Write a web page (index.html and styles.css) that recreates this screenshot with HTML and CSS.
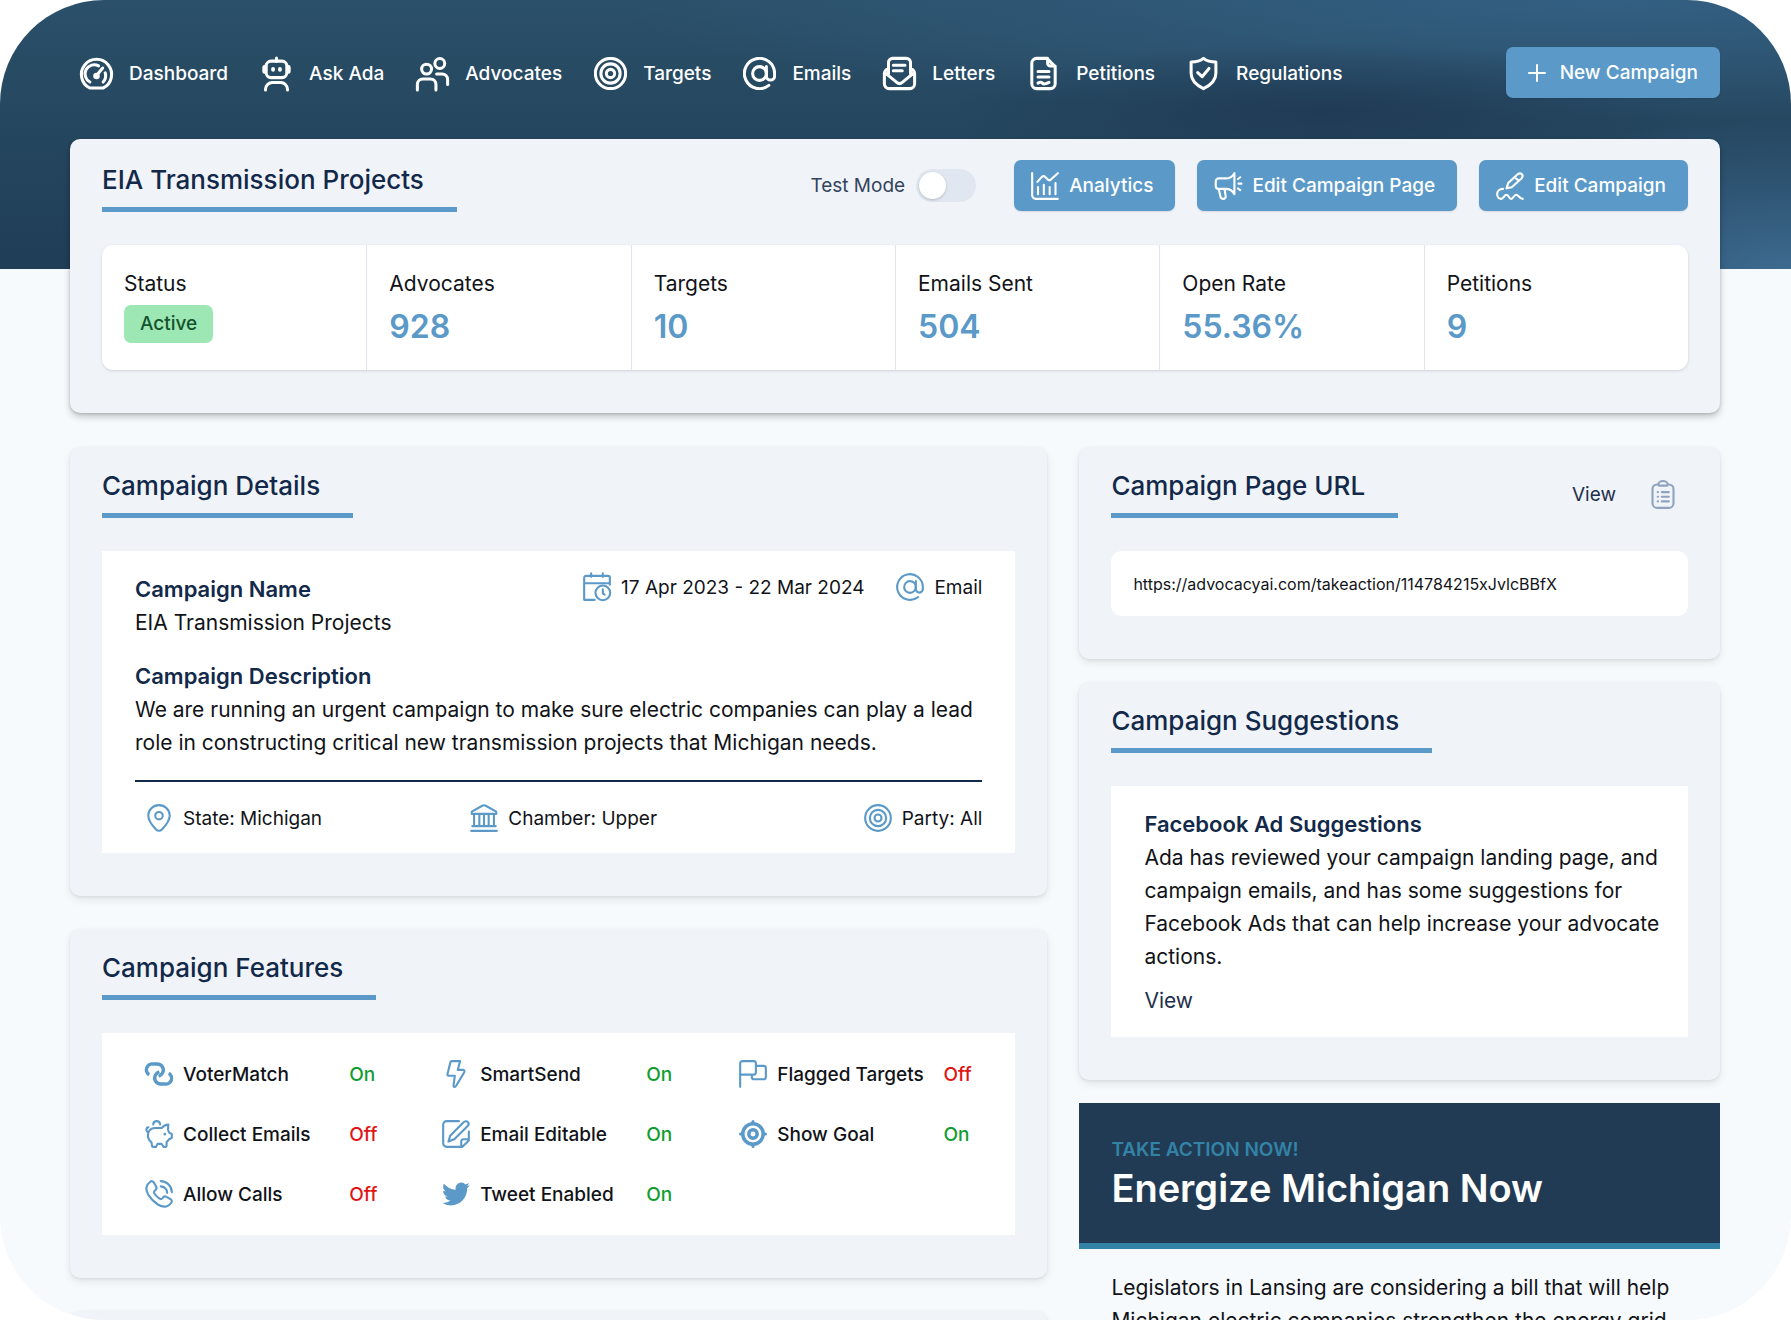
FILE: index.html
```html
<!DOCTYPE html>
<html lang="en">
<head>
<meta charset="utf-8">
<meta name="viewport" content="width=device-width, initial-scale=1">
<title>EIA Transmission Projects</title>
<link rel="stylesheet" href="styles.css">
</head>
<body>
<svg class="sprite" aria-hidden="true">
  <symbol id="i-target" viewBox="0 0 24 24"><circle cx="12" cy="12" r="11"/><circle cx="12" cy="12" r="7"/><circle cx="12" cy="12" r="3"/></symbol>
  <symbol id="i-at" viewBox="0 0 24 24"><circle cx="12" cy="12" r="5"/><path d="M17 7v6.800a3 3 0 0 0 6 0V12a11 11 0 1 0-4.200 8.650"/></symbol>
</svg>
<div class="page">
  <header class="hero">
    <div class="topbar">
      <nav class="nav" aria-label="Main">
        <a href="#"><svg class="icon-lg" viewBox="0 0 24 24"><path d="M7 22.500A11 11 0 1 1 17 22.500Z"/><path d="M7.200 18.200A6.600 6.600 0 0 1 13.500 6.400M18.300 11.500A6.600 6.600 0 0 1 16.800 18.200M12 13.500l4.500-5.500"/><circle cx="12" cy="13.800" r="1.300"/></svg>Dashboard</a>
        <a href="#"><svg class="icon-lg" viewBox="0 0 24 24"><rect x="4.500" y="3" width="15" height="12" rx="3.500"/><path d="M12 .8V3M4 24v-.5a5 5 0 0 1 5-5h6a5 5 0 0 1 5 5v.5"/><path d="M3.300 7.500v3M20.700 7.500v3" stroke-width="3.200"/><path d="M9.500 8.700v.6M14.500 8.700v.6" stroke-width="2.800"/></svg>Ask Ada</a>
        <a href="#"><svg class="icon-lg" viewBox="0 0 24 24"><circle cx="7.700" cy="8.800" r="3.600"/><circle cx="17.300" cy="4.700" r="3.600"/><path d="M1 24v-4a4 4 0 0 1 4-4h5.500a4 4 0 0 1 4 4v4M15 12.300h4a4 4 0 0 1 4 4V20"/></svg>Advocates</a>
        <a href="#"><svg class="icon-lg"><use href="#i-target"/></svg>Targets</a>
        <a href="#"><svg class="icon-lg"><use href="#i-at"/></svg>Emails</a>
        <a href="#"><svg class="icon-lg" viewBox="0 0 24 24"><path d="M4 12V4a3 3 0 0 1 3-3h10a3 3 0 0 1 3 3v8M7.500 6h8.500M7.500 10h6.500M4 8.500a4 4 0 0 0-3 3.500v7.500A3.500 3.500 0 0 0 4.500 23h15a3.500 3.500 0 0 0 3.500-3.500V12a4 4 0 0 0-3-3.500M1.500 11.500l8.500 7a3 3 0 0 0 4 0l8.500-7"/></svg>Letters</a>
        <a href="#"><svg class="icon-lg" viewBox="0 0 24 24"><path d="M14.500 1H7a3.500 3.500 0 0 0-3.500 3.500v15A3.500 3.500 0 0 0 7 23h10a3.500 3.500 0 0 0 3.500-3.500V7ZM15 1v3.500A2 2 0 0 0 17 6.500h3.500M8 10.500h8M8 14.500h8M8 19c1.500-1 2.300-1 3.200 0s2.800.5 4.800-.5"/></svg>Petitions</a>
        <a href="#"><svg class="icon-lg" viewBox="0 0 24 24"><path d="M12 1c2.500 2 5.500 2.600 9 2.700V12c0 5-4.500 8.800-9 11-4.500-2.200-9-6-9-11V3.700C6.500 3.600 9.500 3 12 1Z"/><path d="M7.800 11.300l3.200 3 5-6"/></svg>Regulations</a>
      </nav>
      <button class="btn btn-new" type="button"><svg class="icon-plus" viewBox="0 0 18 18"><path d="M9 1v16M1 9h16"/></svg>New Campaign</button>
    </div>
  </header>

  <main class="content">
    <section class="card overview">
      <div class="card-head">
        <h1 class="title">EIA Transmission Projects</h1>
        <div class="actions">
          <label class="toggle">Test Mode<input type="checkbox" role="switch"></label>
          <button class="btn" type="button"><svg class="icon" viewBox="0 0 24 24"><path d="M1 1v19a3 3 0 0 0 3 3h19M6 19v-6M11 19v-8M16 19v-6M21 19V9.500M5.500 8.500l4-4.500a2 2 0 0 1 2.500 0l2.500 2.500a2 2 0 0 0 2.500 0L23 1"/></svg>Analytics</button>
          <button class="btn" type="button"><svg class="icon" viewBox="0 0 24 24"><path d="M17.500 1c-1.500 3-4 4.500-7.500 4.500H4A2.500 2.500 0 0 0 1.500 8v4A2.500 2.500 0 0 0 4 14.500h6c3.500 0 6 1.500 7.500 4.500ZM4 14.500l1.500 6.500c.3 1.300 1.200 2 2.500 2s2.300-1 2-2.500L9 14.500M21 10h2.500M20.500 6l2-1.500M20.500 14l2 1.500"/></svg>Edit Campaign Page</button>
          <button class="btn" type="button"><svg class="icon" viewBox="0 0 24 24"><path d="M9 14l1.500-4.500L18.500 2c1.200-1 2.500-1.200 3.500-.2s1 2.400 0 3.500L13.500 13ZM17 5.500l2 1.500M6 14.500c-3 0-5 1.800-5 4.300S2.500 23 4.500 23s2.500-3.500 4.500-3.500S11 23 13 23s2.300-3.500 4.300-3.500S20 23 23 23"/></svg>Edit Campaign</button>
        </div>
      </div>
      <dl class="stats">
        <div class="stat"><dt>Status</dt><dd><span class="badge">Active</span></dd></div>
        <div class="stat"><dt>Advocates</dt><dd>928</dd></div>
        <div class="stat"><dt>Targets</dt><dd>10</dd></div>
        <div class="stat"><dt>Emails Sent</dt><dd>504</dd></div>
        <div class="stat"><dt>Open Rate</dt><dd>55.36%</dd></div>
        <div class="stat"><dt>Petitions</dt><dd>9</dd></div>
      </dl>
    </section>

    <div class="columns">
      <div class="main-col">
        <section class="card">
          <div class="card-head"><h2 class="title">Campaign Details</h2></div>
          <div class="box details">
            <div class="details-top">
              <div>
                <h3 class="label">Campaign Name</h3>
                <p>EIA Transmission Projects</p>
              </div>
              <div class="meta">
                <span class="meta-item"><svg class="icon" viewBox="0 0 24 24"><path d="M10 23H1V4a1.500 1.500 0 0 1 1.500-1.500h19A1.500 1.500 0 0 1 23 4v6M1 8.800h22M7 .3v3M17 .3v3"/><circle cx="17" cy="17" r="6.300"/><path d="M17 14v3.500l1.500 1"/></svg>17 Apr 2023 - 22 Mar 2024</span>
                <span class="meta-item"><svg class="icon"><use href="#i-at"/></svg>Email</span>
              </div>
            </div>
            <div>
              <h3 class="label">Campaign Description</h3>
              <p>We are running an urgent campaign to make sure electric companies can play a lead role in constructing critical new transmission projects that Michigan needs.</p>
            </div>
            <div class="facts">
              <span class="meta-item"><svg class="icon" viewBox="0 0 24 24"><path d="M12 1c5.200 0 9.200 4 9.200 9 0 4.500-4 9-6.700 11.900a3.500 3.500 0 0 1-5 0C6.800 19 2.800 14.500 2.800 10c0-5 4-9 9.200-9Z"/><circle cx="12" cy="10" r="3.200"/></svg>State: Michigan</span>
              <span class="meta-item"><svg class="icon" viewBox="0 0 24 24"><path d="M1.500 8.500V6.500L10.500 1.500a3 3 0 0 1 3 0L22.500 6.500v2ZM1 23h22M2 19h20M3.500 9v10M8 9v10M12 9v10M16 9v10M20.500 9v10"/></svg>Chamber: Upper</span>
              <span class="meta-item"><svg class="icon"><use href="#i-target"/></svg>Party: All</span>
            </div>
          </div>
        </section>

        <section class="card">
          <div class="card-head"><h2 class="title">Campaign Features</h2></div>
          <ul class="box features">
            <li><svg class="icon" viewBox="0 0 24 24"><g stroke-width="2.900" stroke-linecap="butt"><path d="M3.600 12.600A5 5 0 0 1 7 3.400h3.500a5.200 5.200 0 0 1 4.600 7.600c-.8 1.300-1.900 2.300-3.400 2.900"/><path d="M20.400 11.400A5 5 0 0 1 17 20.600h-3.500a5.200 5.200 0 0 1-4.600-7.600c.8-1.300 1.900-2.300 3.400-2.900"/></g></svg>VoterMatch <b class="on">On</b></li>
            <li><svg class="icon" viewBox="0 0 24 24"><path d="M8.500 1h7L13.500 8.500H18a1.300 1.300 0 0 1 1.100 2L12 22.300c-.9 1.400-2.300.8-2.100-.6L11 13.500H6c-1 0-1.500-.7-1.300-1.500L7.200 2A1.300 1.300 0 0 1 8.500 1Z"/></svg>SmartSend <b class="on">On</b></li>
            <li><svg class="icon" viewBox="0 0 24 24"><path d="M1 23V3a2 2 0 0 1 2-2h9.500a2 2 0 0 1 2 2v7.500a2 2 0 0 1-2 2H1M14.500 5H21a2 2 0 0 1 2 2v7.500a2 2 0 0 1-2 2h-8a2 2 0 0 1-2-2v-2"/></svg>Flagged Targets <b class="off">Off</b></li>
            <li><svg class="icon" viewBox="0 0 24 24"><path d="M8.500 6.800h6c1.500-1.800 3.200-2.700 5.500-2.800l-.3 4.500 1.200 2.500 2.100 1v3.200l-2.300 1.300-2.200 2.500v3a1 1 0 0 1-1 1h-1.700L14.300 20.500h-3.600L9.500 23H7a1 1 0 0 1-1-1l-.5-3C3.500 17.500 2.500 15.500 2.500 13c0-3.500 2.500-6.200 6-6.200ZM2.800 10.500C.8 10 .5 6.500 3 6.200M7 3.800C7.300 2 8.500 1 10 1s2.700 1 3 2.800"/><path d="M17 12v.2" stroke-width="2.200"/></svg>Collect Emails <b class="off">Off</b></li>
            <li><svg class="icon" viewBox="0 0 24 24"><path d="M14.500 1H4a3 3 0 0 0-3 3v16a3 3 0 0 0 3 3h13.500L23 17.500V10M23 16.500h-4.500a2 2 0 0 0-2 2V23M5.500 18.500l1.500-5L18.500 2c1.200-1.200 2.800-1.200 3.700-.2s.8 2.300-.2 3.300L10.500 16.500Z"/></svg>Email Editable <b class="on">On</b></li>
            <li><svg class="icon" viewBox="0 0 24 24"><circle cx="12" cy="12" r="8.800" stroke-width="3"/><circle cx="12" cy="12" r="3.600" stroke-width="3"/><path d="M12 1.300v2M12 20.700v2M1.300 12h2M20.700 12h2" stroke-width="2.600"/></svg>Show Goal <b class="on">On</b></li>
            <li><svg class="icon" viewBox="0 0 24 24"><path d="M7.500 2l2 3.500c.8 1.300.4 2.500-1 3.500-1 .8-1 1.800-.3 2.800a16 16 0 0 0 4 4c1 .7 2 .7 2.800-.3 1-1.400 2.200-1.800 3.500-1L22 16.500c1.200.8 1.300 2 .5 3-2.800 4-7 4.200-11.500 1.500A27 27 0 0 1 3 13C.3 8.500.5 4.500 4.500 1.500c1-.8 2.200-.7 3 .5ZM13.500 1A9.500 9.500 0 0 1 23 10.500M13.500 5.500a5.500 5.500 0 0 1 5.500 5.500"/></svg>Allow Calls <b class="off">Off</b></li>
            <li><svg class="icon icon-solid" viewBox="0 0 24 24"><path d="M23.950 4.570a10 10 0 0 1-2.820.770 4.960 4.960 0 0 0 2.160-2.720c-.950.550-2 .950-3.130 1.180a4.920 4.920 0 0 0-8.380 4.480C7.690 8.090 4.070 6.130 1.640 3.160a4.820 4.820 0 0 0-.670 2.480c0 1.710.870 3.210 2.190 4.100a4.900 4.900 0 0 1-2.230-.620v.060a4.920 4.920 0 0 0 3.950 4.830 5 5 0 0 1-2.210.080 4.940 4.940 0 0 0 4.600 3.420A9.870 9.870 0 0 1 0 19.540a14 14 0 0 0 7.550 2.210c9.050 0 14-7.500 14-13.980 0-.210 0-.420-.020-.630a9.940 9.940 0 0 0 2.460-2.550z"/></svg>Tweet Enabled <b class="on">On</b></li>
          </ul>
        </section>

        <section class="card"></section>
      </div>

      <div class="side-col">
        <section class="card">
          <div class="card-head">
            <h2 class="title">Campaign Page URL</h2>
            <div class="url-actions">
              <a href="#">View</a>
              <button class="copy" type="button" aria-label="Copy URL"><svg class="icon" viewBox="0 0 24 24"><path d="M8 3H7a4 4 0 0 0-4 4v12a4 4 0 0 0 4 4h10a4 4 0 0 0 4-4V7a4 4 0 0 0-4-4h-1a4 3 0 0 0-8 0ZM8 3a1 1 0 0 0 1 1h6a1 1 0 0 0 1-1M11 9.500h6M11 13.500h6M11 17.500h6M7.500 9.500h.2M7.500 13.500h.2M7.500 17.500h.2"/></svg></button>
            </div>
          </div>
          <input class="url" type="text" readonly aria-label="Campaign page URL" value="https://advocacyai.com/takeaction/114784215xJvlcBBfX">
        </section>

        <section class="card">
          <div class="card-head"><h2 class="title">Campaign Suggestions</h2></div>
          <div class="box suggestion">
            <h3 class="label">Facebook Ad Suggestions</h3>
            <p>Ada has reviewed your campaign landing page, and campaign emails, and has some suggestions for Facebook Ads that can help increase your advocate actions.</p>
            <a href="#">View</a>
          </div>
        </section>

        <article class="preview">
          <header class="banner">
            <p class="kicker">TAKE ACTION NOW!</p>
            <h2>Energize Michigan Now</h2>
          </header>
          <p class="preview-text">Legislators in Lansing are considering a bill that will help Michigan electric companies strengthen the energy grid</p>
        </article>
      </div>
    </div>
  </main>
</div>
</body>
</html>
```

FILE: styles.css
```css
:root {
  --blue: #5a99c8;
  --navy: #12294a;
  --ink: #111318;
  --surface: #f0f3f8;
  --canvas: #f7fafd;
}

* {
  box-sizing: border-box;
}

body {
  margin: 0;
  background: #fff;
  color: var(--ink);
  font: 400 19px/28px Inter, "Liberation Sans", sans-serif;
}

h1, h2, h3, p, dl, dd, ul {
  margin: 0;
  padding: 0;
}

a {
  color: inherit;
  text-decoration: none;
}

button, input {
  font: inherit;
}

svg {
  flex: none;
  fill: none;
  stroke: currentColor;
  stroke-linecap: round;
  stroke-linejoin: round;
}

.sprite {
  position: absolute;
  width: 0;
  height: 0;
}

.icon {
  width: 28px;
  height: 28px;
  stroke-width: 1.8;
  overflow: visible;
}

.icon-lg {
  width: 33px;
  height: 33px;
  stroke-width: 2.2;
  overflow: visible;
}

.icon-solid {
  fill: currentColor;
  stroke: none;
}

.icon-plus {
  width: 18px;
  height: 18px;
  stroke-width: 2;
}

.page {
  height: 100vh;
  overflow-y: auto;
  scrollbar-width: none;
  border-radius: 104px;
  background: var(--canvas);
}

/* Header */

.hero {
  height: 269px;
  padding: 47px 71px 0 70px;
  background:
    radial-gradient(ellipse 420px 150px at 100% 100%, #3d6b90, transparent),
    radial-gradient(ellipse 380px 70px at 74% 42%, #203b55, transparent),
    radial-gradient(ellipse 1000px 120px at 90% 0, #335f82, transparent),
    linear-gradient(#2b5069, #25465f 50%, #203d57);
}

.topbar {
  display: flex;
  align-items: center;
  justify-content: space-between;
}

.nav {
  display: flex;
  gap: 32px;
  padding: 2px 0 0 10px;
  color: #fff;
  font-weight: 500;
}

.nav a {
  display: flex;
  align-items: center;
  gap: 16px;
}

.btn {
  display: flex;
  align-items: center;
  gap: 10px;
  height: 51px;
  padding: 0 22px 0 17px;
  border: 0;
  border-radius: 7px;
  background: var(--blue);
  color: #fff;
  font-weight: 500;
  white-space: nowrap;
  box-shadow: 0 1px 2px rgba(0, 0, 0, .1);
}

.btn-new {
  gap: 14px;
  padding-left: 22px;
}

/* Cards */

.content {
  margin-top: -130px;
  padding: 0 71px 0 70px;
}

.card {
  min-height: 120px;
  padding: 19px 32px 43px;
  border-radius: 10px;
  background: var(--surface);
  box-shadow: 0 4px 8px rgba(0, 0, 0, .08), 0 1px 3px rgba(0, 0, 0, .08);
}

.overview {
  padding-top: 21px;
  box-shadow: 0 4px 7px rgba(0, 0, 0, .2), 0 1px 3px rgba(0, 0, 0, .16);
}

.card-head {
  display: flex;
  align-items: flex-start;
  justify-content: space-between;
  margin-bottom: 33px;
}

.title {
  padding: 0 33px 8px 0;
  border-bottom: 5px solid var(--blue);
  color: var(--navy);
  font-size: 26px;
  line-height: 39px;
  font-weight: 500;
}

.actions {
  display: flex;
  align-items: center;
  gap: 22px;
}

.toggle {
  display: flex;
  align-items: center;
  gap: 11px;
  margin-right: 16px;
  color: #33435c;
}

.toggle input {
  appearance: none;
  width: 60px;
  height: 33px;
  margin: 0;
  padding: 3px;
  border-radius: 17px;
  background: #e1e7f0;
}

.toggle input::before {
  content: "";
  display: block;
  width: 27px;
  height: 27px;
  border-radius: 50%;
  background: #fff;
  box-shadow: 0 1px 3px rgba(0, 0, 0, .2);
}

.toggle input:checked::before {
  margin-left: auto;
}

.stats {
  display: grid;
  grid-template-columns: repeat(6, 1fr);
  border-radius: 11px;
  background: #fff;
  box-shadow: 0 1px 3px rgba(0, 0, 0, .14);
}

.stat {
  padding: 22px;
}

.stat + .stat {
  border-left: 1px solid #dfe5ee;
}

.stat dt {
  font-size: 21px;
  line-height: 33px;
}

.stat dd {
  height: 43px;
  margin-top: 5px;
  color: var(--blue);
  font-size: 32px;
  line-height: 43px;
  font-weight: 600;
}

.badge {
  display: block;
  width: fit-content;
  padding: 5px 16px;
  border-radius: 7px;
  background: #9de7b5;
  color: #14532d;
  font-size: 19px;
  line-height: 28px;
  font-weight: 500;
}

.columns {
  display: grid;
  grid-template-columns: 978fr 641fr;
  gap: 32px;
  margin-top: 34px;
}

.main-col,
.side-col {
  display: flex;
  flex-direction: column;
  gap: 33px;
  min-width: 0;
}

.side-col {
  gap: 23px;
}

.box {
  background: #fff;
  font-size: 21px;
  line-height: 33px;
}

.label {
  color: var(--navy);
  font-size: 22px;
  font-weight: 600;
}

.details {
  display: flex;
  flex-direction: column;
  gap: 21px;
  padding: 22px 33px 21px;
}

.details-top {
  display: flex;
  justify-content: space-between;
}

.meta {
  display: flex;
  gap: 32px;
}

.meta-item {
  display: flex;
  align-items: center;
  gap: 10px;
  height: 28px;
  font-size: 19px;
}

.meta-item .icon,
.features .icon {
  color: var(--blue);
}

.facts {
  display: grid;
  grid-template-columns: repeat(3, 1fr);
  padding: 22px 0 0 10px;
  border-top: 2px solid var(--navy);
}

.facts .meta-item:nth-child(2) {
  justify-self: center;
}

.facts .meta-item:nth-child(3) {
  justify-self: end;
}

.features {
  display: grid;
  grid-template-columns: repeat(3, 1fr);
  padding: 11px;
  list-style: none;
  font-size: 19px;
  font-weight: 500;
}

.features li {
  display: grid;
  grid-template-columns: 28px 1fr 61px;
  column-gap: 10px;
  align-items: center;
  height: 60px;
  padding-left: 32px;
  white-space: nowrap;
}

.features b {
  font-weight: 500;
}

.on {
  color: #119c2f;
}

.off {
  color: #e01616;
}

.url-actions {
  display: flex;
  align-items: center;
  gap: 33px;
  padding: 15px 11px 0 0;
  color: #1e2f4b;
}

.copy {
  display: flex;
  padding: 0;
  border: 0;
  background: none;
  color: #8fa3c0;
}

.url {
  display: block;
  width: 100%;
  height: 65px;
  padding: 0 22px;
  border: 0;
  border-radius: 11px;
  background: #fff;
  color: var(--ink);
  font-size: 16px;
}

.suggestion {
  padding: 22px 22px 20px 33px;
}

.suggestion a {
  display: block;
  width: fit-content;
  margin-top: 11px;
  color: #1e2f4b;
}

.banner {
  padding: 33px 32px 31px;
  border-bottom: 6px solid #3383a6;
  background: #223b55;
}

.banner h2 {
  color: #fff;
  font-size: 38px;
  line-height: 48px;
  font-weight: 600;
}

.kicker {
  color: #3383a6;
  font-weight: 600;
}

.preview-text {
  padding: 22px 32px;
  font-size: 21px;
  line-height: 33px;
}
```
